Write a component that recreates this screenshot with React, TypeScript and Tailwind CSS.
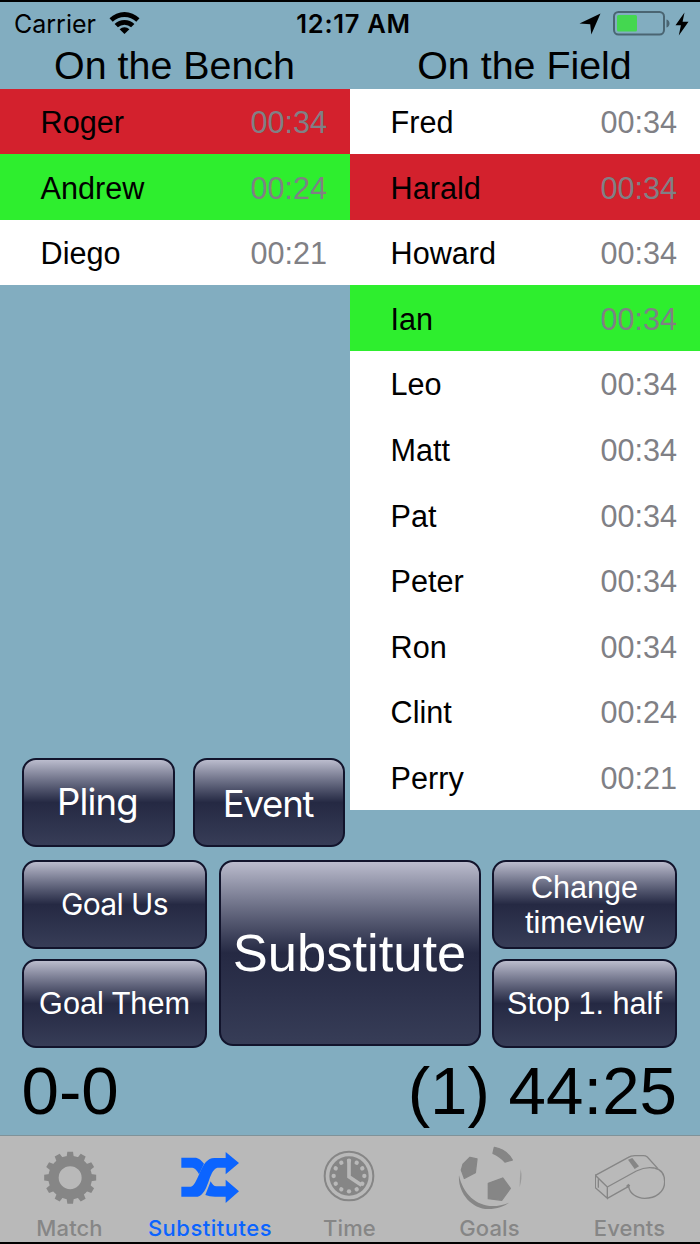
import type { ReactNode } from "react";
import clsx from "clsx";

type Player = { name: string; time: string; mark?: "out" | "in" };

const bench: Player[] = [
  { name: "Roger", time: "00:34", mark: "out" },
  { name: "Andrew", time: "00:24", mark: "in" },
  { name: "Diego", time: "00:21" },
];

const field: Player[] = [
  { name: "Fred", time: "00:34" },
  { name: "Harald", time: "00:34", mark: "out" },
  { name: "Howard", time: "00:34" },
  { name: "Ian", time: "00:34", mark: "in" },
  { name: "Leo", time: "00:34" },
  { name: "Matt", time: "00:34" },
  { name: "Pat", time: "00:34" },
  { name: "Peter", time: "00:34" },
  { name: "Ron", time: "00:34" },
  { name: "Clint", time: "00:24" },
  { name: "Perry", time: "00:21" },
];

function PlayerList({ players }: { players: Player[] }) {
  return (
    <ul>
      {players.map((player) => (
        <li
          key={player.name}
          className={clsx(
            "flex h-[65.6px] items-center justify-between pt-[3px] pr-[23px] pl-[40.6px] text-[30.6px]",
            player.mark === "out" && "bg-[#d3212d]",
            player.mark === "in" && "bg-[#2eee2e]",
            !player.mark && "bg-white"
          )}
        >
          <span>{player.name}</span>
          <span className="text-[#808085]">{player.time}</span>
        </li>
      ))}
    </ul>
  );
}

function GlossButton({ className, children }: { className?: string; children: ReactNode }) {
  return (
    <button
      className={clsx(
        "flex items-center justify-center rounded-[14px] border-2 border-[#12142c] bg-linear-to-b from-[#bbbccd] via-[#252943] to-[#373d57] text-center whitespace-nowrap text-white",
        className
      )}
    >
      {children}
    </button>
  );
}

function StatusBar() {
  return (
    <div className="grid h-[45px] grid-cols-3 items-center border-t-2 border-black px-[14px] font-['Inter'] text-[25px]">
      <div className="flex items-center gap-[13px]">
        <span className="pt-[2px]">Carrier</span>
        <svg width="31" height="22" viewBox="0 0 31 22" className="-mt-[1px]">
          <path d="M0.5 6.2a21.5 21.5 0 0 1 30 0l-3.2 3.6a17 17 0 0 0-23.6 0z" />
          <path d="M5.6 12.1a14.2 14.2 0 0 1 19.8 0l-3.3 3.2a9.8 9.8 0 0 0-13.2 0z" />
          <path d="M10.6 17.2a7 7 0 0 1 9.8 0l-4.9 4.8z" />
        </svg>
      </div>
      <div className="pt-[2px] pl-[7px] text-center text-[25.5px] font-semibold tracking-[0.7px]">12:17 AM</div>
      <div className="-mr-[3px] flex items-center justify-end">
        <svg width="22" height="22" viewBox="0 0 22 22" className="mr-[12px]">
          <path d="M21.5 0.5 12.3 21.5 11.2 11.2 0.5 10.4z" />
        </svg>
        <svg width="58" height="25" viewBox="0 0 58 25">
          <rect x="1" y="1" width="50" height="22.5" rx="4.5" fill="none" stroke="#4a6572" strokeWidth="2" />
          <rect x="4" y="4" width="20" height="16.5" rx="1.5" fill="#44d750" />
          <path d="M53.5 8.5c4 1 4 7 0 8z" fill="#4a6572" />
        </svg>
        <svg width="14" height="24" viewBox="0 0 14 24" className="ml-[4px]">
          <path d="M9.5 0.5 0.5 13.2h5.4L3.8 23.5 13.5 9.8H7.6z" />
        </svg>
      </div>
    </div>
  );
}

function GearIcon() {
  return (
    <svg width="70" height="70" viewBox="0 0 210 210" fill="currentColor">
      {Array.from({ length: 12 }, (_, i) => (
        <path key={i} d="M94 50 97 29h17L117 50z" transform={`rotate(${i * 30} 105.5 107)`} />
      ))}
      <circle cx="105.5" cy="107" r="50" fill="none" stroke="currentColor" strokeWidth="31" />
    </svg>
  );
}

function SwapIcon() {
  return (
    <svg width="70" height="70" viewBox="0 0 210 210" fill="currentColor">
      <path d="M19 47H63q12 2 24 18L72 97Q62 77 52 77H19z" />
      <path d="M19 134H48C72 126 76 48 118 48H152V30l40 33-40 34V77H127C99 86 103 154 68 164H19z" />
      <path d="M107 118q7 15 17 15h28v-20l40 35-40 35v-19H120q-17 0-29-5z" />
    </svg>
  );
}

function ClockIcon() {
  return (
    <svg width="70" height="70" viewBox="0 0 210 210" fill="none">
      <circle cx="102" cy="102" r="73" stroke="currentColor" strokeWidth="6" />
      <circle cx="102" cy="102" r="59" fill="currentColor" />
      {Array.from({ length: 12 }, (_, i) => (
        <circle key={i} cx="102" cy="56" r="6.5" fill="#b9b9b9" transform={`rotate(${i * 30} 102 102)`} />
      ))}
      <path d="M102 52v52l38 26" stroke="#b9b9b9" strokeWidth="11" />
    </svg>
  );
}

function BallIcon() {
  return (
    <svg width="70" height="70" viewBox="0 0 210 210" fill="currentColor" strokeLinejoin="round">
      <g stroke="currentColor" strokeWidth="4">
        <path d="M45 46 66 51 61 92 28 109 19 84 24 67z" />
        <path d="M143 108 166 139 140 175 100 170V124z" />
        <path d="M118 16Q154 22 172 54L150 60Q134 42 114 34z" />
      </g>
      <path d="M12 100C8 150 48 201 100 201 126 201 148 193 162 182 90 212 28 174 12 100z" />
      <path d="M197 82q6 26-3 53 0-27 3-53z" opacity="0.6" />
    </svg>
  );
}

function WhistleIcon() {
  return (
    <svg width="70" height="70" viewBox="0 0 210 210" fill="none" stroke="currentColor" strokeWidth="4">
      <path d="M1 100 100 46q7-5 20-5h25q7 0 12 4l31 34" />
      <path d="M1 100 37 135V169L1 137zM10 112v25" />
      <path d="M37 135 124 87q28-14 54-9" />
      <path d="M37 169 101 133C104 155 125 169 149 169 182 169 209 150 209 119 209 95 197 82 178 78" />
      <path d="M99 53 112 48 132 73 119 81z" fill="currentColor" stroke="none" />
      <path d="M96 135l7-7" strokeWidth="8" />
    </svg>
  );
}

const tabs = [
  { label: "Match", icon: <GearIcon /> },
  { label: "Substitutes", icon: <SwapIcon />, active: true },
  { label: "Time", icon: <ClockIcon /> },
  { label: "Goals", icon: <BallIcon /> },
  { label: "Events", icon: <WhistleIcon /> },
];

export default function App() {
  return (
    <div className="flex h-[1244px] w-[700px] flex-col overflow-hidden bg-[#82adc0] font-['Liberation_Sans',sans-serif] text-black">
      <StatusBar />
      <div className="grid h-[43.6px] grid-cols-2 text-center text-[39.4px] leading-[40px]">
        <h2 className="-ml-[1px]">On the Bench</h2>
        <h2 className="-ml-[1px]">On the Field</h2>
      </div>

      <main className="grid h-[758.4px] grid-cols-2">
        <div className="flex flex-col justify-between">
          <PlayerList players={bench} />
          <div className="flex gap-[18px] pl-[22px] font-['Inter'] text-[36.5px]">
            <GlossButton className="h-[89px] w-[153px] pr-[2px] tracking-[-0.8px]">Pling</GlossButton>
            <GlossButton className="h-[89px] w-[152px] pt-[4px] pr-[2px] tracking-[-1.2px]">Event</GlossButton>
          </div>
        </div>
        <PlayerList players={field} />
      </main>

      <div className="mt-[13px] flex gap-[11.5px] pl-[22px] text-[30.6px]">
        <div className="flex flex-col gap-[10px]">
          <GlossButton className="h-[89px] w-[185px] font-['Inter'] text-[30px] tracking-[-0.6px]">Goal Us</GlossButton>
          <GlossButton className="h-[89px] w-[185px]">Goal Them</GlossButton>
        </div>
        <GlossButton className="h-[186px] w-[262px] text-[52.5px]">Substitute</GlossButton>
        <div className="flex flex-col gap-[10px]">
          <GlossButton className="h-[89px] w-[185px] pt-[2px] leading-[35px]">
            Change
            <br />
            timeview
          </GlossButton>
          <GlossButton className="h-[89px] w-[185px]">Stop 1. half</GlossButton>
        </div>
      </div>

      <div className="flex flex-1 items-center justify-between pr-[23px] pb-[2px] pl-[21.5px] text-[67.3px] leading-none">
        <span>0-0</span>
        <span>(1) 44:25</span>
      </div>

      <nav className="grid h-[109px] grid-cols-5 border-t border-b-2 border-t-[#7f9299] border-b-black bg-[#b9b9b9] font-['Inter'] text-[22px] font-medium">
        {tabs.map((tab) => (
          <div
            key={tab.label}
            className={clsx(
              "flex flex-col items-center pt-[6px] leading-[32px]",
              tab.active ? "tracking-[0.5px] text-[#0b64ff]" : "-ml-[1px] tracking-[0.1px] text-[#868686]"
            )}
          >
            {tab.icon}
            <span>{tab.label}</span>
          </div>
        ))}
      </nav>
    </div>
  );
}
